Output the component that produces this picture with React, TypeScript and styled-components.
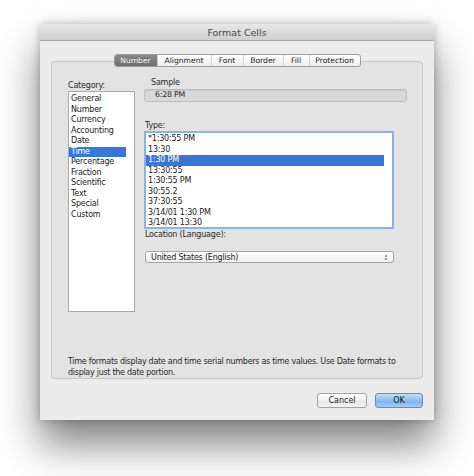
import { createGlobalStyle } from "styled-components";
import styled from "styled-components";

const Global = createGlobalStyle`
  html, body {
    margin: 0;
    padding: 0;
    background: #ffffff;
  }
  body {
    font-family: "DejaVu Sans", "Liberation Sans", sans-serif;
    font-size: 8px;
    letter-spacing: -0.2px;
    color: #1a1a1a;
  }
`;

const Page = styled.div`
  width: 474px;
  height: 476px;
  padding: 24px 0 0 40px;
  box-sizing: border-box;
`;

const Window = styled.div`
  width: 394px;
  height: 396px;
  background: #ececec;
  display: flex;
  flex-direction: column;
  box-shadow: 0 24px 40px rgba(0, 0, 0, 0.5), 0 0 8px rgba(0, 0, 0, 0.25);
  border-radius: 4px 4px 0 0;
`;

const TitleBar = styled.div`
  height: 16px;
  flex: none;
  background: linear-gradient(#e8e8e8, #cfcfcf);
  border-bottom: 1px solid #a9a9a9;
  border-radius: 4px 4px 0 0;
  display: flex;
  align-items: center;
  justify-content: center;
  font-size: 9.5px;
  letter-spacing: 0;
  color: #4a4a4a;
`;

const Body = styled.div`
  flex: 1;
  display: flex;
  flex-direction: column;
  padding: 13px 11px 12px;
`;

const TabRow = styled.div`
  display: flex;
  justify-content: center;
  position: relative;
  z-index: 1;
`;

const Tabs = styled.div`
  display: flex;
  height: 13px;
  border: 1px solid #9c9c9c;
  border-radius: 3px;
  background: linear-gradient(#ffffff, #eeeeee);
  overflow: hidden;
  box-sizing: border-box;
`;

const Tab = styled.div<{ $active?: boolean; $w: number }>`
  width: ${(p) => p.$w}px;
  display: flex;
  align-items: center;
  justify-content: center;
  font-size: 7.6px;
  letter-spacing: 0;
  color: ${(p) => (p.$active ? "#ffffff" : "#1a1a1a")};
  background: ${(p) =>
    p.$active ? "linear-gradient(#8a8a8a, #6e6e6e)" : "transparent"};
  text-shadow: ${(p) => (p.$active ? "0 -1px 0 #555" : "none")};
  & + & {
    border-left: 1px solid #cfcfcf;
  }
`;

const Panel = styled.div`
  margin-top: -6px;
  height: 318px;
  box-sizing: border-box;
  background: #e3e3e3;
  border: 1px solid #c6c6c6;
  border-radius: 3px;
  padding: 15px 0 0 16px;
  display: flex;
  flex-direction: column;
`;

const Columns = styled.div`
  display: flex;
  gap: 9px;
`;

const LeftCol = styled.div`
  width: 67px;
  display: flex;
  flex-direction: column;
`;

const RightCol = styled.div`
  width: 263px;
  display: flex;
  flex-direction: column;
`;

const Label = styled.div<{ $mt?: number; $ml?: number }>`
  height: 11px;
  line-height: 11px;
  margin-top: ${(p) => p.$mt ?? 0}px;
  margin-left: ${(p) => p.$ml ?? 0}px;
  color: #2a2a2a;
`;

const List = styled.div<{ $h: number; $w: number; $focus?: boolean }>`
  width: ${(p) => p.$w}px;
  height: ${(p) => p.$h}px;
  box-sizing: border-box;
  background: #ffffff;
  border: ${(p) => (p.$focus ? "2px solid #8db2e3" : "1px solid #a9a9a9")};
  padding: ${(p) => (p.$focus ? "1px 8px 0 0" : "2px 8px 0 0")};
`;

const Row = styled.div<{ $sel?: boolean }>`
  height: 10.5px;
  line-height: 10.5px;
  padding-left: 2px;
  white-space: nowrap;
  color: ${(p) => (p.$sel ? "#ffffff" : "#1a1a1a")};
  background: ${(p) => (p.$sel ? "#3a77d4" : "transparent")};
`;

const SampleBox = styled.div`
  height: 13px;
  box-sizing: border-box;
  margin-top: 1px;
  background: #d9d9d9;
  border: 1px solid #bdbdbd;
  border-radius: 3px;
  box-shadow: inset 0 1px 1px rgba(0, 0, 0, 0.08);
  padding-left: 10px;
  line-height: 10px;
  font-size: 7.8px;
  color: #2a2a2a;
`;

const Select = styled.div`
  width: 249px;
  height: 12px;
  box-sizing: border-box;
  margin: 11px 0 0 1px;
  border: 1px solid #a6a6a6;
  border-radius: 3px;
  background: linear-gradient(#ffffff, #efefef);
  display: flex;
  align-items: center;
  justify-content: space-between;
  padding: 0 5px 0 5px;
  color: #1a1a1a;
`;

const Description = styled.div`
  margin-top: auto;
  margin-bottom: 0;
  line-height: 10.4px;
  width: 340px;
  letter-spacing: -0.28px;
  color: #2a2a2a;
`;

const Footer = styled.div`
  display: flex;
  justify-content: flex-end;
  gap: 8px;
  margin-top: 14px;
`;

const Button = styled.div<{ $primary?: boolean; $w: number }>`
  width: ${(p) => p.$w}px;
  height: 15px;
  box-sizing: border-box;
  border-radius: 3px;
  display: flex;
  align-items: center;
  justify-content: center;
  font-size: 8px;
  letter-spacing: 0;
  color: #1a1a1a;
  border: 1px solid ${(p) => (p.$primary ? "#5d8ccc" : "#a3a3a3")};
  background: ${(p) =>
    p.$primary
      ? "linear-gradient(#c6dff8, #8dbdf0 50%, #79b0ec 51%, #a6cdf5)"
      : "linear-gradient(#ffffff, #f1f1f1 50%, #e6e6e6 51%, #f4f4f4)"};
`;

const categories = [
  "General",
  "Number",
  "Currency",
  "Accounting",
  "Date",
  "Time",
  "Percentage",
  "Fraction",
  "Scientific",
  "Text",
  "Special",
  "Custom",
];

const types = [
  "*1:30:55 PM",
  "13:30",
  "1:30 PM",
  "13:30:55",
  "1:30:55 PM",
  "30:55.2",
  "37:30:55",
  "3/14/01 1:30 PM",
  "3/14/01 13:30",
];

const tabs: [string, number][] = [
  ["Number", 42],
  ["Alignment", 53],
  ["Font", 31],
  ["Border", 39],
  ["Fill", 25],
  ["Protection", 50],
];

function Arrows() {
  return (
    <svg width="4" height="7" viewBox="0 0 4 7">
      <path d="M0.5 2.6 L2 1 L3.5 2.6 Z M0.5 4.4 L2 6 L3.5 4.4 Z" fill="#444" />
    </svg>
  );
}

export default function App() {
  return (
    <Page>
      <Global />
      <Window>
        <TitleBar>Format Cells</TitleBar>
        <Body>
          <TabRow>
            <Tabs>
              {tabs.map(([t, w]) => (
                <Tab key={t} $w={w} $active={t === "Number"}>
                  {t}
                </Tab>
              ))}
            </Tabs>
          </TabRow>
          <Panel>
            <Columns>
              <LeftCol>
                <Label $mt={3}>Category:</Label>
                <List $w={67} $h={221}>
                  {categories.map((c) => (
                    <Row key={c} $sel={c === "Time"}>
                      {c}
                    </Row>
                  ))}
                </List>
              </LeftCol>
              <RightCol>
                <Label $ml={7}>Sample</Label>
                <SampleBox>6:28 PM</SampleBox>
                <Label $mt={18} $ml={1}>
                  Type:
                </Label>
                <List $w={250} $h={98} $focus>
                  {types.map((t) => (
                    <Row key={t} $sel={t === "1:30 PM"}>
                      {t}
                    </Row>
                  ))}
                </List>
                <Label $mt={0} $ml={1}>
                  Location (Language):
                </Label>
                <Select>
                  <span>United States (English)</span>
                  <Arrows />
                </Select>
              </RightCol>
            </Columns>
            <Description>
              Time formats display date and time serial numbers as time values.
              Use Date formats to display just the date portion.
            </Description>
          </Panel>
          <Footer>
            <Button $w={50}>Cancel</Button>
            <Button $w={48} $primary>
              OK
            </Button>
          </Footer>
        </Body>
      </Window>
    </Page>
  );
}
